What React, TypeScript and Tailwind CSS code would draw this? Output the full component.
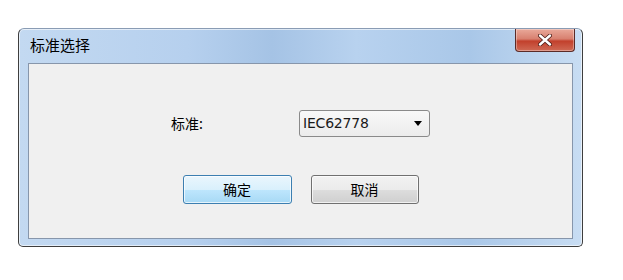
const cjk = { fontFamily: '"Noto Sans CJK SC", "Liberation Sans", sans-serif' };

function CloseButton() {
  return (
    <div className="mr-[7px] flex h-[23px] w-[60px] items-center justify-center rounded-b-[4px] border border-t-0 border-[#5b2b27] bg-[linear-gradient(to_bottom,#e9a99a_0%,#d8806f_45%,#c2402c_55%,#cf6a55_100%)] shadow-[inset_0_0_0_1px_rgba(255,255,255,0.35)]">
      <svg width="14" height="12" viewBox="0 0 14 12">
        <path d="M2 1.5 L12 10.5 M12 1.5 L2 10.5" stroke="#4a1a14" strokeWidth="4" strokeLinecap="round" />
        <path d="M2 1.5 L12 10.5 M12 1.5 L2 10.5" stroke="#ffffff" strokeWidth="2.4" strokeLinecap="round" />
      </svg>
    </div>
  );
}

function Combo() {
  return (
    <div className="flex h-[27px] w-[131px] items-center justify-between rounded-[3px] border border-[#8a8a8a] bg-[linear-gradient(to_bottom,#f8f8f8,#ececec)] pl-[3px] pr-[7px]">
      <span className="text-[#1a1a1a]" style={{ fontFamily: '"DejaVu Sans", sans-serif', fontSize: 14, letterSpacing: '-0.2px' }}>
        IEC62778
      </span>
      <svg width="8" height="5" viewBox="0 0 8 5">
        <path d="M0 0 L8 0 L4 5 Z" fill="#000" />
      </svg>
    </div>
  );
}

export default function App() {
  return (
    <div className="h-[280px] w-[623px] overflow-hidden bg-white pl-[18px] pt-[28px]">
      <div className="flex h-[219px] w-[565px] flex-col rounded-t-[6px] rounded-b-[5px] border border-[#3e3e3e] border-t-[#8a9cb4] bg-[linear-gradient(to_right,#c3d9f1_0%,#b6d0ee_30%,#a5c3e5_45%,#b8d2ef_60%,#a9c7e8_80%,#c8ddf3_100%)] px-[9px] pb-[7px] shadow-[inset_0_0_0_1px_rgba(255,255,255,0.6)]">
        <div className="-mx-[9px] flex h-[34px] items-start justify-between">
          <span className="ml-[11px] mt-[6px] text-[15px] leading-[20px] text-black" style={cjk}>
            标准选择
          </span>
          <CloseButton />
        </div>
        <div className="flex flex-1 flex-col items-center border border-[#8796ab] bg-[#f0f0f0]" style={cjk}>
          <div className="mt-[46px] flex items-center">
            <span className="w-[128px] text-[14px] text-black">标准:</span>
            <Combo />
          </div>
          <div className="mt-[38px] flex gap-[19px]">
            <div className="flex h-[29px] w-[109px] items-center justify-center rounded-[3px] border border-[#3c7fb1] bg-[linear-gradient(to_bottom,#eaf6fd_0%,#d9f0fc_50%,#bee6fd_51%,#a7d9f5_100%)] text-[14px] text-black shadow-[inset_0_0_0_1px_rgba(255,255,255,0.7)]">
              确定
            </div>
            <div className="flex h-[29px] w-[108px] items-center justify-center rounded-[3px] border border-[#707070] bg-[linear-gradient(to_bottom,#f2f2f2_0%,#ebebeb_50%,#dddddd_51%,#cfcfcf_100%)] text-[14px] text-black shadow-[inset_0_0_0_1px_rgba(255,255,255,0.7)]">
              取消
            </div>
          </div>
        </div>
      </div>
    </div>
  );
}
